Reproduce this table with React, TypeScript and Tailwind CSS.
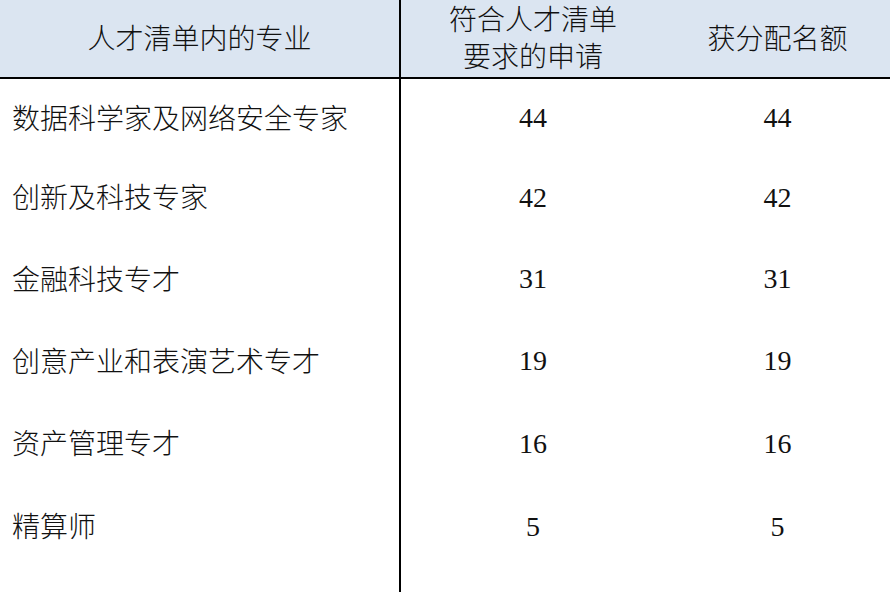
const rows = [
  { name: '数据科学家及网络安全专家', met: '44', got: '44', h: 'h-[78px]' },
  { name: '创新及科技专家', met: '42', got: '42', h: 'h-[81px]' },
  { name: '金融科技专才', met: '31', got: '31', h: 'h-[82px]' },
  { name: '创意产业和表演艺术专才', met: '19', got: '19', h: 'h-[82px]' },
  { name: '资产管理专才', met: '16', got: '16', h: 'h-[83px]' },
  { name: '精算师', met: '5', got: '5', h: 'h-[83px]' },
];

const App = () => {
  return (
    <div className="w-[892px] h-[592px] bg-white overflow-hidden font-['Liberation_Serif','Noto_Sans_CJK_SC',serif] text-[28px] text-[#111] font-light">
      <div className="w-[890px] h-full flex flex-col">
        {/* header */}
        <div className="flex h-[79px] bg-[#dbe5f1] border-b-2 border-black">
          <div className="w-[401px] border-r-2 border-black flex items-center justify-center pt-[3px]">
            人才清单内的专业
          </div>
          <div className="w-[264px] flex items-center justify-center text-center leading-[37px] pt-[1px]">
            符合人才清单<br />要求的申请
          </div>
          <div className="flex-1 flex items-center justify-center pt-[3px]">获分配名额</div>
        </div>

        {rows.map((r) => (
          <div key={r.name} className={`flex ${r.h}`}>
            <div className="w-[401px] border-r-2 border-black flex items-center pl-3 pt-[3px]">{r.name}</div>
            <div className="w-[264px] flex items-center justify-center">{r.met}</div>
            <div className="flex-1 flex items-center justify-center">{r.got}</div>
          </div>
        ))}

        {/* rest of the column line */}
        <div className="flex flex-1">
          <div className="w-[401px] border-r-2 border-black" />
        </div>
      </div>
    </div>
  );
};

export default App;
